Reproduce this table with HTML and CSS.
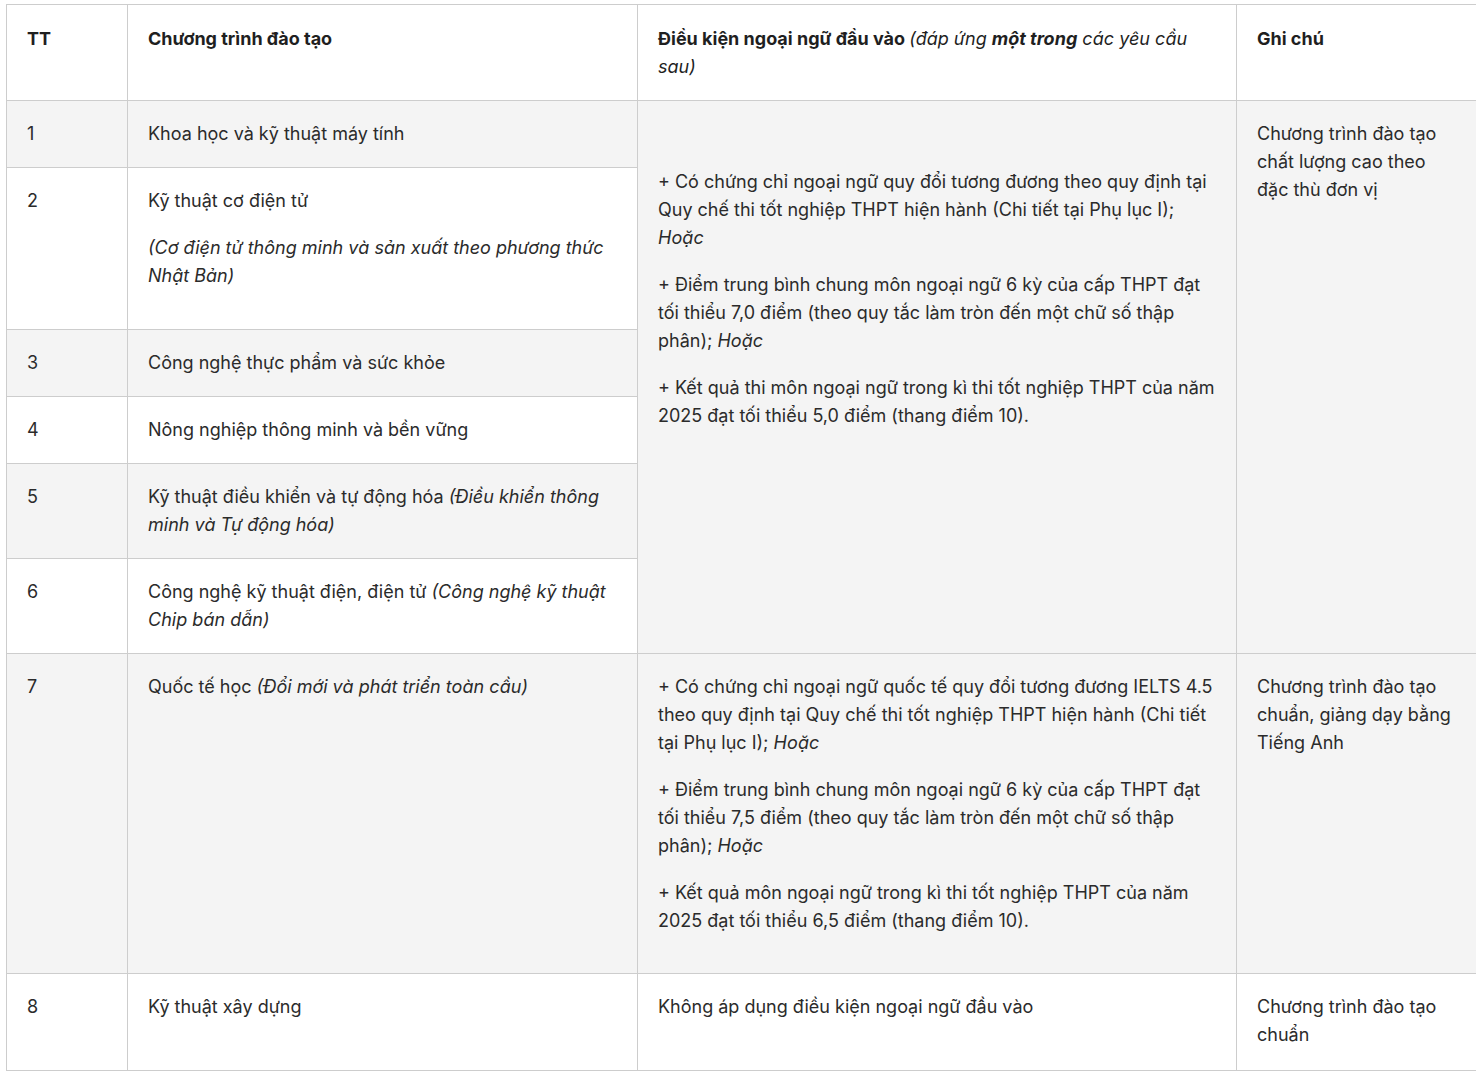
FILE: index.html
```html
<!DOCTYPE html>
<html lang="vi">
<head>
<meta charset="utf-8">
<title>Điều kiện ngoại ngữ đầu vào</title>
<link rel="stylesheet" href="styles.css">
</head>
<body>
<table class="grid">
  <colgroup>
    <col class="c-tt">
    <col class="c-prog">
    <col class="c-cond">
    <col class="c-note">
  </colgroup>
  <thead>
    <tr>
      <th>TT</th>
      <th>Chương trình đào tạo</th>
      <th>Điều kiện ngoại ngữ đầu vào <em class="thin">(đáp ứng <strong>một trong</strong> các yêu cầu sau)</em></th>
      <th>Ghi chú</th>
    </tr>
  </thead>
  <tbody>
    <tr class="gray">
      <td>1</td>
      <td>Khoa học và kỹ thuật máy tính</td>
      <td rowspan="6" class="gray merged">
        <p>+ Có chứng chỉ ngoại ngữ quy đổi tương đương theo quy định tại Quy chế thi tốt nghiệp THPT hiện hành (Chi tiết tại Phụ lục I); <em>Hoặc</em></p>
        <p>+ Điểm trung bình chung môn ngoại ngữ 6 kỳ của cấp THPT đạt tối thiểu 7,0 điểm (theo quy tắc làm tròn đến một chữ số thập phân); <em>Hoặc</em></p>
        <p>+ Kết quả thi môn ngoại ngữ trong kì thi tốt nghiệp THPT của năm 2025 đạt tối thiểu 5,0 điểm (thang điểm 10).</p>
      </td>
      <td rowspan="6" class="gray">Chương trình đào tạo chất lượng cao theo đặc thù đơn vị</td>
    </tr>
    <tr>
      <td>2</td>
      <td class="stack">
        <p>Kỹ thuật cơ điện tử</p>
        <p><em>(Cơ điện tử thông minh và sản xuất theo phương thức Nhật Bản)</em></p>
      </td>
    </tr>
    <tr class="gray">
      <td>3</td>
      <td>Công nghệ thực phẩm và sức khỏe</td>
    </tr>
    <tr>
      <td>4</td>
      <td>Nông nghiệp thông minh và bền vững</td>
    </tr>
    <tr class="gray">
      <td>5</td>
      <td>Kỹ thuật điều khiển và tự động hóa <em>(Điều khiển thông minh và Tự động hóa)</em></td>
    </tr>
    <tr>
      <td>6</td>
      <td>Công nghệ kỹ thuật điện, điện tử <em>(Công nghệ kỹ thuật Chip bán dẫn)</em></td>
    </tr>
    <tr class="gray">
      <td>7</td>
      <td>Quốc tế học <em>(Đổi mới và phát triển toàn cầu)</em></td>
      <td>
        <p>+ Có chứng chỉ ngoại ngữ quốc tế quy đổi tương đương IELTS 4.5 theo quy định tại Quy chế thi tốt nghiệp THPT hiện hành (Chi tiết tại Phụ lục I); <em>Hoặc</em></p>
        <p>+ Điểm trung bình chung môn ngoại ngữ 6 kỳ của cấp THPT đạt tối thiểu 7,5 điểm (theo quy tắc làm tròn đến một chữ số thập phân); <em>Hoặc</em></p>
        <p>+ Kết quả môn ngoại ngữ trong kì thi tốt nghiệp THPT của năm 2025 đạt tối thiểu 6,5 điểm (thang điểm 10).</p>
      </td>
      <td>Chương trình đào tạo chuẩn, giảng dạy bằng Tiếng Anh</td>
    </tr>
    <tr class="last">
      <td>8</td>
      <td>Kỹ thuật xây dựng</td>
      <td>Không áp dụng điều kiện ngoại ngữ đầu vào</td>
      <td>Chương trình đào tạo chuẩn</td>
    </tr>
  </tbody>
</table>
</body>
</html>
```
FILE: styles.css
```css
html, body {
  background: #ffffff;
}
body {
  margin: 4px 6px;
  font-family: Inter, "Noto Sans", "Liberation Sans", sans-serif;
  font-size: 18px;
  line-height: 28px;
  color: #2b2b2b;
}
.grid {
  width: 1470px;
  border-collapse: collapse;
  table-layout: fixed;
}
.c-tt { width: 121px; }
.c-prog { width: 510px; }
.c-cond { width: 599px; }
.c-note { width: 240px; }
.grid th,
.grid td {
  border: 1px solid #cdcdcd;
  padding: 19px 20px;
  text-align: left;
  vertical-align: top;
}
.grid th {
  padding-top: 20px;
  font-weight: 700;
  color: #1f1f1f;
  background: #ffffff;
}
.grid th .thin {
  font-weight: 400;
}
.grid th .thin strong {
  font-weight: 700;
}
.gray > td,
td.gray {
  background: #f4f4f4;
}
.grid p {
  margin: 0 0 19px 0;
}
.grid td.stack {
  padding-bottom: 20px;
}
.grid td.merged {
  padding-top: 67px;
}
.grid .last > td {
  padding-bottom: 21px;
}
```
